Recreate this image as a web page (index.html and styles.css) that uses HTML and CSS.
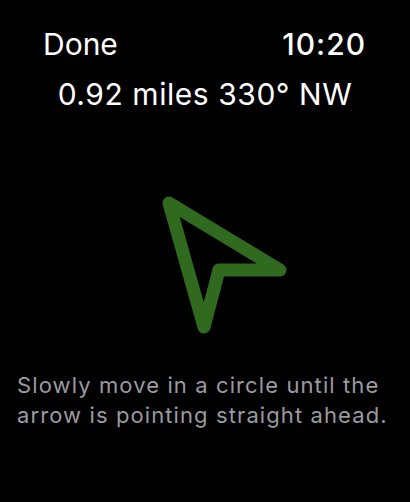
FILE: index.html
```html
<!DOCTYPE html>
<html lang="en">
<head>
  <meta charset="UTF-8">
  <meta name="viewport" content="width=device-width, initial-scale=1.0">
  <title>Compass</title>
  <link rel="stylesheet" href="styles.css">
</head>
<body>
  <div class="screen">
    <div class="top-bar">
      <span class="done">Done</span>
      <span class="clock">10:20</span>
    </div>
    <div class="heading">0.92 miles 330° NW</div>

    <!-- direction arrow -->
    <svg class="arrow" viewBox="0 119 410 251" width="410" height="251">
      <polygon points="169,203 280,270 219,270 204,327"
               fill="none" stroke="#2f6a1f" stroke-width="13"
               stroke-linejoin="round" />
    </svg>

    <p class="hint">Slowly move in a circle until the arrow is pointing straight ahead.</p>
  </div>
</body>
</html>
```

FILE: styles.css
```css
* {
  margin: 0;
  padding: 0;
  box-sizing: border-box;
}

body {
  background: #000;
  font-family: Inter, "Noto Sans", sans-serif;
  color: #fff;
}

.screen {
  width: 410px;
  height: 502px;
  padding-top: 19px;
  display: flex;
  flex-direction: column;
}

.top-bar {
  display: flex;
  justify-content: space-between;
  padding: 0 44px 0 43px;
  font-size: 30px;
  line-height: 50px;
}

.clock {
  font-weight: 500;
  letter-spacing: 1px;
}

.heading {
  text-align: center;
  font-size: 30px;
  line-height: 50px;
  letter-spacing: 0.55px;
}

.arrow {
  display: block;
}

.hint {
  padding: 0 17px;
  color: #9a9aa0;
  font-size: 22px;
  line-height: 30px;
  letter-spacing: 1.1px;
}
```
